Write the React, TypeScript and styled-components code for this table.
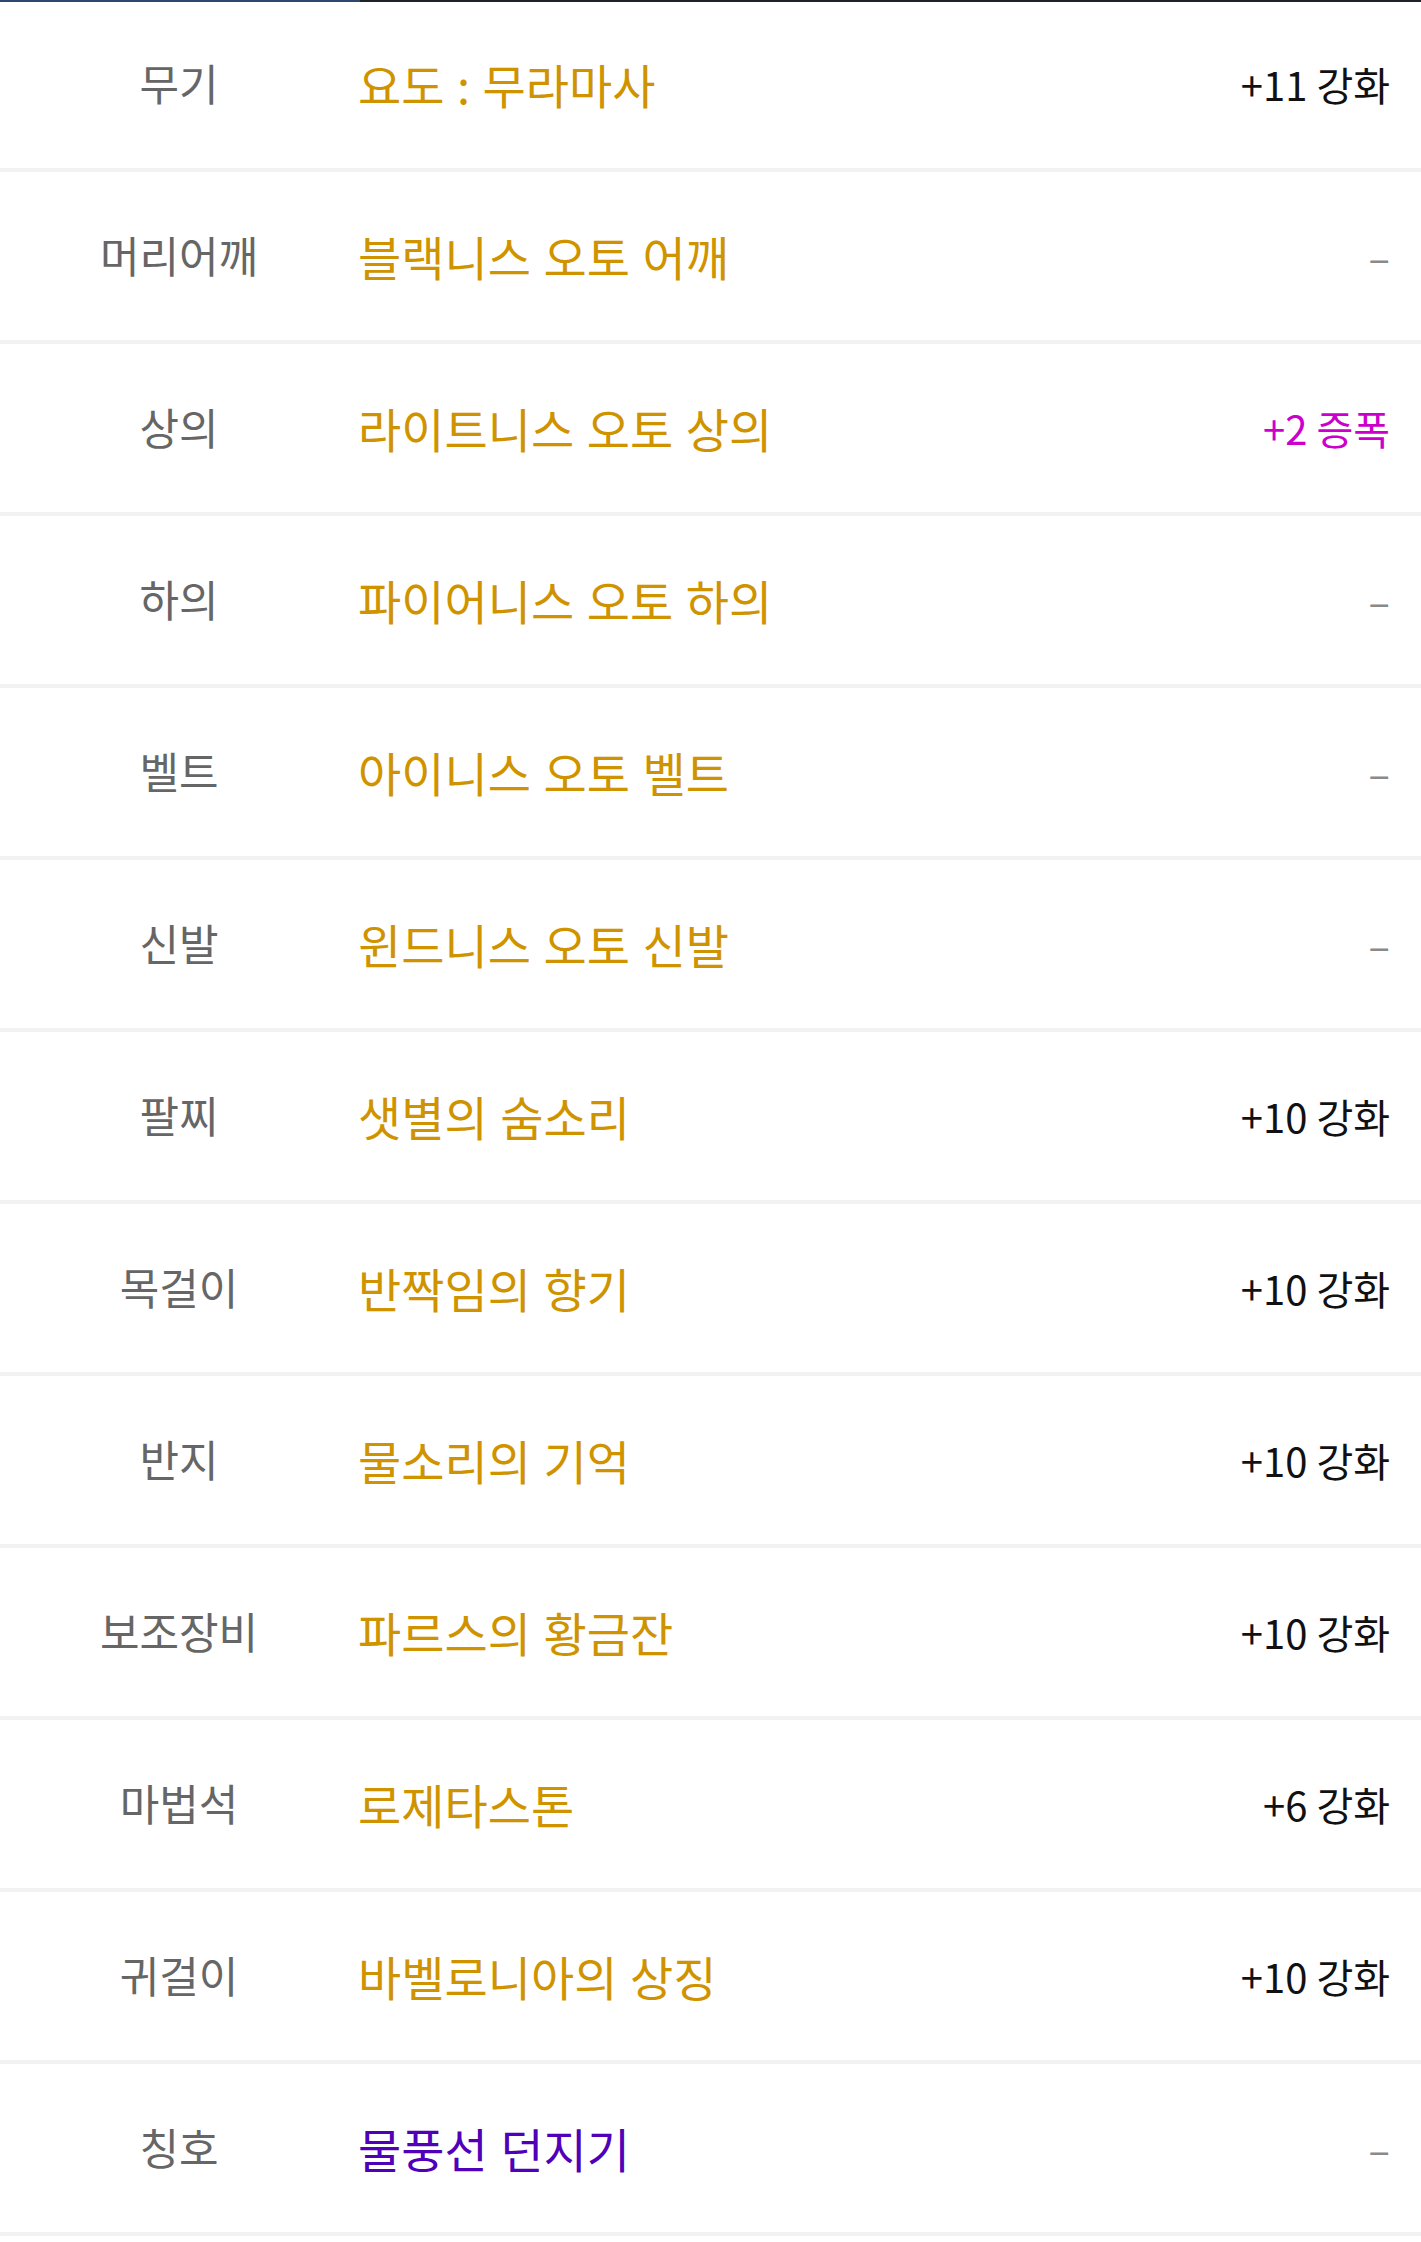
import React from "react";
import styled, { createGlobalStyle } from "styled-components";

const GlobalStyle = createGlobalStyle`
  html, body {
    margin: 0;
    padding: 0;
    background: #fff;
  }
  body {
    font-family: "Noto Sans CJK KR", "Noto Sans", sans-serif;
  }
`;

type Tone = "normal" | "title";
type EnhanceKind = "plain" | "amplify" | "none";

interface Equip {
  slot: string;
  name: string;
  tone: Tone;
  enhance: string;
  kind: EnhanceKind;
}

const items: Equip[] = [
  { slot: "무기", name: "요도 : 무라마사", tone: "normal", enhance: "+11 강화", kind: "plain" },
  { slot: "머리어깨", name: "블랙니스 오토 어깨", tone: "normal", enhance: "–", kind: "none" },
  { slot: "상의", name: "라이트니스 오토 상의", tone: "normal", enhance: "+2 증폭", kind: "amplify" },
  { slot: "하의", name: "파이어니스 오토 하의", tone: "normal", enhance: "–", kind: "none" },
  { slot: "벨트", name: "아이니스 오토 벨트", tone: "normal", enhance: "–", kind: "none" },
  { slot: "신발", name: "윈드니스 오토 신발", tone: "normal", enhance: "–", kind: "none" },
  { slot: "팔찌", name: "샛별의 숨소리", tone: "normal", enhance: "+10 강화", kind: "plain" },
  { slot: "목걸이", name: "반짝임의 향기", tone: "normal", enhance: "+10 강화", kind: "plain" },
  { slot: "반지", name: "물소리의 기억", tone: "normal", enhance: "+10 강화", kind: "plain" },
  { slot: "보조장비", name: "파르스의 황금잔", tone: "normal", enhance: "+10 강화", kind: "plain" },
  { slot: "마법석", name: "로제타스톤", tone: "normal", enhance: "+6 강화", kind: "plain" },
  { slot: "귀걸이", name: "바벨로니아의 상징", tone: "normal", enhance: "+10 강화", kind: "plain" },
  { slot: "칭호", name: "물풍선 던지기", tone: "title", enhance: "–", kind: "none" },
];

const Page = styled.div`
  position: relative;
  width: 100%;
  background: #fff;
`;

// thin progress strip across the very top
const TopStrip = styled.div`
  position: absolute;
  top: 0;
  left: 0;
  right: 0;
  height: 2px;
  display: flex;
  background: #1f2327;
  z-index: 1;
`;

const StripFill = styled.div`
  width: 360px;
  background: #2f4673;
`;

const List = styled.ul`
  list-style: none;
  margin: 0;
  padding: 0;
`;

const Row = styled.li`
  display: flex;
  align-items: center;
  height: 172px;
  box-sizing: border-box;
  border-bottom: 4px solid #f2f2f2;
  padding-right: 31px;
`;

const Slot = styled.span`
  width: 358px;
  flex-shrink: 0;
  text-align: center;
  font-size: 43px;
  color: #666;
  margin-top: -4px;
`;

const Name = styled.span<{ $tone: Tone }>`
  flex: 1;
  font-size: 47px;
  word-spacing: 2px;
  color: ${(p) => (p.$tone === "title" ? "#5000b8" : "#d09300")};
  margin-top: -2px;
`;

const Enhance = styled.span<{ $kind: EnhanceKind }>`
  font-size: 40px;
  color: ${(p) =>
    p.$kind === "amplify" ? "#cc00cc" : p.$kind === "none" ? "#8a8a8a" : "#111"};
`;

export default function App() {
  return (
    <Page>
      <GlobalStyle />
      <TopStrip>
        <StripFill />
      </TopStrip>
      <List>
        {items.map((it) => (
          <Row key={it.slot}>
            <Slot>{it.slot}</Slot>
            <Name $tone={it.tone}>{it.name}</Name>
            <Enhance $kind={it.kind}>{it.enhance}</Enhance>
          </Row>
        ))}
      </List>
    </Page>
  );
}
